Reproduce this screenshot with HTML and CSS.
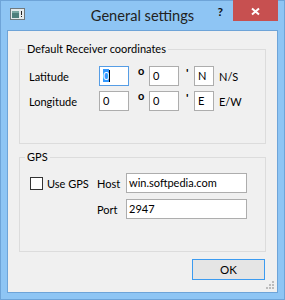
FILE: index.html
```html
<!DOCTYPE html>
<html lang="en">
<head>
  <meta charset="UTF-8">
  <title>General settings</title>
  <link rel="stylesheet" href="styles.css">
</head>
<body>
  <div class="window">
    <div class="titlebar">
      <div class="title-left">
        <svg class="app-icon" width="15" height="12" viewBox="0 0 15 12">
          <rect x="0.5" y="0.5" width="14" height="11" fill="#e4eaec" stroke="#70797d"/>
          <rect x="2" y="3" width="7" height="7" fill="#4f7f7c"/>
          <rect x="2" y="3" width="7" height="2" fill="#7aa6a2"/>
          <rect x="11" y="3" width="1" height="4" fill="#222"/>
          <rect x="11" y="8" width="1" height="1" fill="#222"/>
        </svg>
      </div>
      <div class="title">General settings</div>
      <div class="title-right">
        <span class="help">?</span>
        <span class="close">
          <svg width="45" height="21" viewBox="0 0 45 21">
            <path d="M19 8.5 L26 14.5 M26 8.5 L19 14.5" stroke="#fff" stroke-width="2" fill="none"/>
          </svg>
        </span>
      </div>
    </div>

    <div class="client">
      <fieldset class="group coords">
        <legend>Default Receiver coordinates</legend>
        <div class="coord-grid">
          <span class="label">Latitude</span>
          <span class="field focused"><span class="sel">0</span><span class="caret"></span></span>
          <span class="unit deg">o</span>
          <span class="field">0</span>
          <span class="unit min">'</span>
          <span class="field short">N</span>
          <span class="hint">N/S</span>

          <span class="label">Longitude</span>
          <span class="field">0</span>
          <span class="unit deg">o</span>
          <span class="field">0</span>
          <span class="unit min">'</span>
          <span class="field short">E</span>
          <span class="hint">E/W</span>
        </div>
      </fieldset>

      <fieldset class="group gps">
        <legend>GPS</legend>
        <div class="gps-grid">
          <label class="check"><span class="box"></span>Use GPS</label>
          <span class="label">Host</span>
          <span class="field wide">win.softpedia.com</span>

          <span></span>
          <span class="label">Port</span>
          <span class="field wide">2947</span>
        </div>
      </fieldset>

      <div class="actions">
        <button class="ok">OK</button>
      </div>

      <svg class="grip" width="9" height="9" viewBox="0 0 9 9">
        <rect x="6" y="0" width="2" height="2" fill="#bcbcbc"/>
        <rect x="3" y="3" width="2" height="2" fill="#bcbcbc"/>
        <rect x="6" y="3" width="2" height="2" fill="#bcbcbc"/>
        <rect x="0" y="6" width="2" height="2" fill="#bcbcbc"/>
        <rect x="3" y="6" width="2" height="2" fill="#bcbcbc"/>
        <rect x="6" y="6" width="2" height="2" fill="#bcbcbc"/>
      </svg>
    </div>
  </div>
</body>
</html>
```

FILE: styles.css
```css
* {
  box-sizing: border-box;
}

body {
  margin: 0;
  font-family: Lato, "Open Sans", sans-serif;
  font-size: 11px;
  color: #000;
}

.window {
  width: 285px;
  height: 300px;
  border: 1px solid #6ea4d8;
  background-color: #8ec5f4;
  padding: 0 6px 6px;
  display: flex;
  flex-direction: column;
}

/* Title bar */
.titlebar {
  height: 29px;
  flex: none;
  display: grid;
  grid-template-columns: 1fr auto 1fr;
}

.app-icon {
  display: block;
  margin: 7px 0 0 3px;
}

.title {
  font-size: 14.6px;
  line-height: 20px;
  padding-top: 5px;
  color: #222;
}

.title-right {
  display: flex;
  justify-content: flex-end;
  align-items: flex-start;
}

.help {
  font-weight: bold;
  font-size: 12px;
  line-height: 12px;
  margin: 5px 10px 0 0;
  color: #111;
}

.close {
  display: block;
  width: 45px;
  height: 21px;
  margin-top: -1px;
  background-color: #c75050;
}

.close svg {
  display: block;
}

/* Client area */
.client {
  flex: 1;
  border: 1px solid #6ea4d8;
  background-color: #f0f0f0;
  padding: 0 11px;
  display: flex;
  flex-direction: column;
}

.group {
  border: 1px solid #dcdcdc;
  margin: 0;
  padding: 0 0 32px;
  min-width: 0;
}

.group legend {
  padding: 0 2px;
  margin-left: 5px;
  line-height: 16px;
}

.coords {
  margin-top: 10px;
}

.gps {
  margin-top: 5px;
}

.field {
  display: block;
  height: 20px;
  border: 1px solid #adadad;
  background-color: #fff;
  padding: 0 3px;
  line-height: 18px;
  white-space: nowrap;
}

.field.focused {
  border-color: #569de5;
}

.sel {
  background-color: #3399ff;
  color: #fff;
}

.caret {
  display: inline-block;
  width: 1px;
  height: 12px;
  background-color: #000;
  vertical-align: -2px;
}

/* Coordinates */
.coord-grid {
  display: grid;
  grid-template-columns: 70px 30px 20px 30px 15px 20px auto;
  row-gap: 5px;
  padding: 9px 0 0 9px;
  align-items: center;
}

.unit {
  align-self: start;
  font-weight: bold;
  line-height: 12px;
}

.unit.deg {
  padding-left: 9px;
  font-size: 11px;
  margin-top: -1px;
}

.unit.min {
  padding-left: 7px;
  margin-top: 1px;
  font-size: 12px;
}

.hint {
  padding-left: 5px;
}

/* GPS */
.gps-grid {
  display: grid;
  grid-template-columns: 67px 29px 121px;
  row-gap: 6px;
  padding: 8px 0 0 10px;
  align-items: center;
}

.check {
  display: flex;
  align-items: center;
  gap: 4px;
}

.check .box {
  width: 13px;
  height: 13px;
  border: 1px solid #333;
  background-color: #fff;
}

.field.wide {
  padding-left: 2px;
}

/* Buttons */
.actions {
  display: flex;
  justify-content: flex-end;
  margin-top: 7px;
}

.ok {
  width: 73px;
  height: 21px;
  margin-right: 1px;
  border: 1px solid #3c9bf0;
  background-color: #e5e5e5;
  font-family: inherit;
  font-size: 11.5px;
  padding: 0;
  color: #000;
}

.grip {
  display: block;
  align-self: flex-end;
  margin: 1px -9px 0 0;
}
```
